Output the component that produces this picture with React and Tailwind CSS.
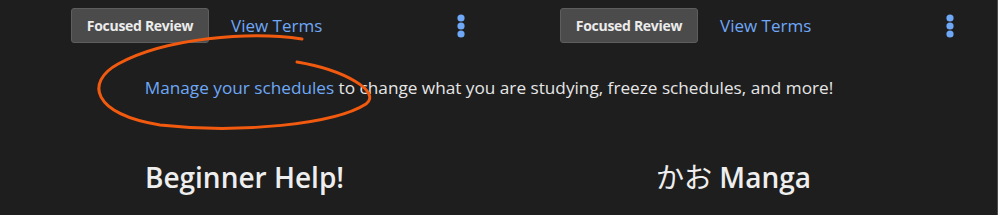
const Kebab = () => (
  <svg width="8" height="24" viewBox="0 0 8 24" className="block">
    <circle cx="4" cy="4" r="3.6" fill="#6ea8f7" />
    <circle cx="4" cy="12" r="3.6" fill="#6ea8f7" />
    <circle cx="4" cy="20" r="3.6" fill="#6ea8f7" />
  </svg>
);

const Toolbar = () => (
  <div className="flex items-center pl-[71px] pr-[24px] pt-2">
    <button className="h-[35px] w-[138px] rounded-[3px] border border-[#5e5e5e] bg-[#4b4b4b] text-[14px] font-bold tracking-[-0.3px] text-[#ececec]">
      Focused Review
    </button>
    <a className="ml-[22px] text-[17px] text-[#6ea8f7] cursor-pointer">View Terms</a>
    <div className="ml-auto pt-[1px]">
      <Kebab />
    </div>
  </div>
);

export default function App() {
  return (
    <div
      className="relative h-[215px] w-[998px] overflow-hidden border-r border-[#4d4d4d] bg-[#1e1e1e] text-[#e6e6e6]"
      style={{ fontFamily: '"Open Sans", "Noto Sans CJK JP", sans-serif' }}
    >
      {/* Deck toolbars */}
      <div className="grid w-[978px] grid-cols-2">
        <Toolbar />
        <Toolbar />
      </div>

      {/* Info line */}
      <p className="mt-[33px] w-[978px] text-center text-[17.2px] leading-[24px]">
        <a className="text-[#6ea8f7] cursor-pointer">Manage your schedules</a> to change what you
        are studying, freeze schedules, and more!
      </p>

      {/* Headings */}
      <div className="mt-[59px] grid w-[978px] grid-cols-2">
        <h2 className="text-center text-[28px] font-semibold leading-[36px] text-[#eeeeee]">
          Beginner Help!
        </h2>
        <h2 className="text-center text-[28px] font-semibold leading-[36px] text-[#eeeeee]">
          <span className="font-normal">かお</span> Manga
        </h2>
      </div>

      {/* Hand-drawn annotation */}
      <svg
        className="pointer-events-none absolute left-0 top-0"
        width="998"
        height="215"
        viewBox="0 0 998 215"
      >
        <path
          d="M302 39 C 250 31, 165 38, 118 64 C 85 82, 92 114, 160 125 C 240 134, 335 124, 366 104 C 382 92, 345 70, 297 62"
          fill="none"
          stroke="#f25a0f"
          strokeWidth="3"
          strokeLinecap="round"
        />
      </svg>
    </div>
  );
}
